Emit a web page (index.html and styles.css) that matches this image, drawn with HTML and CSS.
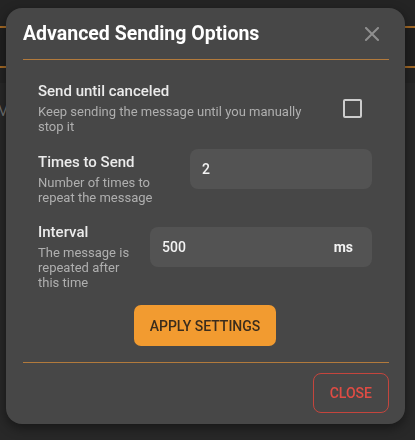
FILE: index.html
```html
<!DOCTYPE html>
<html lang="en">
<head>
<meta charset="utf-8">
<title>Advanced Sending Options</title>
<link rel="stylesheet" href="styles.css">
</head>
<body>
<div class="page">
  <div class="topbar"></div>
  <div class="nav"></div>
  <div class="subbar"></div>
  <div class="content"><span class="ghost">M</span></div>
</div>

<div class="overlay">
  <div class="modal">
    <div class="modal-header">
      <h2 class="modal-title">Advanced Sending Options</h2>
      <button class="icon-btn" aria-label="Close">
        <svg width="14" height="14" viewBox="0 0 14 14"><path d="M1 1L13 13M13 1L1 13" stroke="#8f8f8f" stroke-width="2" stroke-linecap="square"/></svg>
      </button>
    </div>
    <div class="modal-body">
      <div class="row row-center">
        <div class="text text-wide">
          <div class="label">Send until canceled</div>
          <div class="desc">Keep sending the message until you manually stop it</div>
        </div>
        <span class="checkbox"></span>
      </div>
      <div class="row">
        <div class="text">
          <div class="label">Times to Send</div>
          <div class="desc">Number of times to repeat the message</div>
        </div>
        <div class="field field-times"><span class="value">2</span></div>
      </div>
      <div class="row">
        <div class="text">
          <div class="label">Interval</div>
          <div class="desc">The message is repeated after this time</div>
        </div>
        <div class="field field-interval"><span class="value">500</span><span class="unit">ms</span></div>
      </div>
      <div class="actions">
        <button class="btn-apply">APPLY SETTINGS</button>
      </div>
    </div>
    <div class="modal-footer">
      <button class="btn-close">CLOSE</button>
    </div>
  </div>
</div>
</body>
</html>
```

FILE: styles.css
```css
* { box-sizing: border-box; }
html, body { margin: 0; padding: 0; }
body {
  width: 415px;
  height: 440px;
  overflow: hidden;
  background: #282828;
  font-family: Roboto, "Liberation Sans", sans-serif;
}
.page { height: 440px; }
.topbar { height: 26px; background: #242424; }
.nav {
  height: 42px;
  background: #202020;
  border-top: 2px solid #a46a26;
  border-bottom: 2px solid #a46a26;
}
.subbar { height: 15px; background: #242424; }
.content { height: 357px; background: #282828; padding-top: 18px; }
.ghost { color: #777; font-size: 14px; margin-left: -3px; }

.overlay {
  position: fixed;
  inset: 0;
  padding: 8px 0 0 6px;
}
.modal {
  width: 399px;
  background: #474747;
  border-radius: 16px;
  padding: 0 16px 11px 17px;
  box-shadow: 0 4px 12px rgba(0, 0, 0, 0.45);
}
.modal-header {
  height: 52px;
  display: flex;
  align-items: center;
  justify-content: space-between;
  border-bottom: 1px solid #b27a3c;
  padding-right: 10px;
}
.modal-title {
  margin: 0;
  font-size: 19.5px;
  font-weight: 700;
  color: #ffffff;
  line-height: 24px;
}
.icon-btn {
  background: none;
  border: 0;
  padding: 0;
  width: 14px;
  height: 14px;
  display: flex;
}
.modal-body {
  padding: 22px 17px 0 15px;
  display: flex;
  flex-direction: column;
  gap: 15px;
}
.row {
  display: flex;
  align-items: center;
  gap: 20px;
}
.row-center { justify-content: space-between; padding-right: 10px; }
.text { flex: 1; min-width: 0; }
.text-wide { flex: 0 0 270px; }
.label {
  font-size: 15px;
  font-weight: 500;
  line-height: 18px;
  color: #ebebeb;
  margin-bottom: 4px;
}
.desc {
  font-size: 13px;
  line-height: 15px;
  color: #afafaf;
}
.checkbox {
  width: 19px;
  height: 19px;
  border: 2px solid #cdcdcd;
  border-radius: 2px;
  flex: none;
}
.field {
  flex: none;
  height: 40px;
  margin-bottom: 19px;
  background: #535353;
  border-radius: 8px;
  display: flex;
  align-items: center;
  justify-content: space-between;
  padding: 0 19px 0 12px;
  font-size: 14px;
  color: #f2f2f2;
}
.field-times { width: 182px; }
.field-interval { width: 222px; }
.value { font-weight: 500; }
.unit { font-weight: 700; }
.actions { display: flex; justify-content: center; padding-top: 0; }
.btn-apply {
  height: 41px;
  padding: 0 16px;
  background: #f29b30;
  color: #3b2d1d;
  border: 0;
  border-radius: 7px;
  font-family: Roboto, "Liberation Sans", sans-serif;
  font-size: 14px;
  font-weight: 500;
}
.modal-footer {
  margin-top: 16px;
  border-top: 1px solid #b27a3c;
  padding-top: 10px;
  display: flex;
  justify-content: flex-end;
}
.btn-close {
  height: 40px;
  padding: 0 16px;
  background: transparent;
  color: #e04c44;
  border: 1px solid #c4453d;
  border-radius: 8px;
  font-family: Roboto, "Liberation Sans", sans-serif;
  font-size: 14px;
  font-weight: 500;
}
```
